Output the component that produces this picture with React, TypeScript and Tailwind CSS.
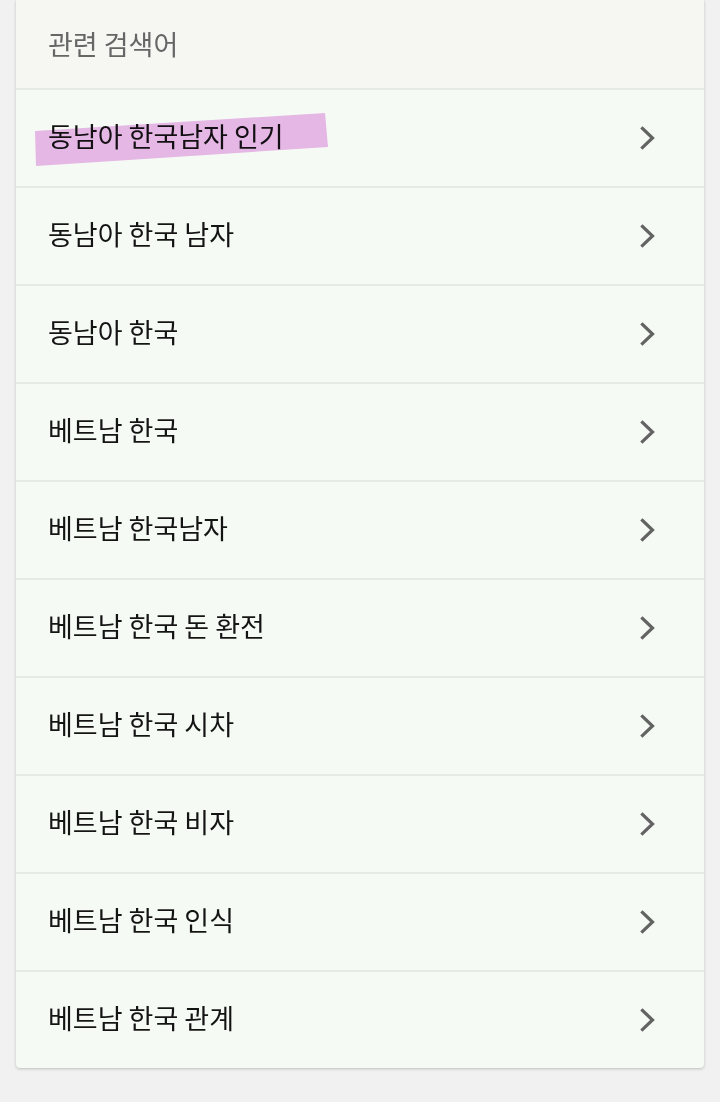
import * as React from 'react';

const items = [
  '동남아 한국남자 인기',
  '동남아 한국 남자',
  '동남아 한국',
  '베트남 한국',
  '베트남 한국남자',
  '베트남 한국 돈 환전',
  '베트남 한국 시차',
  '베트남 한국 비자',
  '베트남 한국 인식',
  '베트남 한국 관계',
];

const font = { fontFamily: '"Noto Sans CJK KR", "Noto Sans", sans-serif' };

function Chevron() {
  return (
    <svg width="16" height="24" viewBox="0 0 16 24" className="shrink-0">
      <path d="M2.5 2.5 L12.5 12 L2.5 21.5" fill="none" stroke="#636363" strokeWidth="3.2" strokeLinecap="square" />
    </svg>
  );
}

// highlighter stroke over the first row
function Highlight() {
  return (
    <svg className="pointer-events-none absolute left-0 top-0 mix-blend-multiply" width="340" height="98">
      <polygon points="19,41 309,23 312,57 20,76" fill="#eebbef" />
    </svg>
  );
}

export default function App() {
  return (
    <div className="min-h-[1102px] w-[720px] bg-[#f1f1f1] px-4 pb-9" style={font}>
      <div className="overflow-hidden rounded-b-[4px] bg-[#f5faf4] shadow-[0_1px_3px_rgba(0,0,0,0.22)]">
        <div className="flex h-[88px] items-center bg-[#f6f7f3] pl-8 text-[27px] text-[#666666]">
          관련 검색어
        </div>
        {items.map((item, i) => (
          <div
            key={item}
            className="relative flex h-[98px] items-center justify-between border-t-2 border-[#e6e9e4] pl-8 pr-[48px]"
          >
            <span className="-mt-1 text-[27px] text-[#141414]">{item}</span>
            <Chevron />
            {i === 0 && <Highlight />}
          </div>
        ))}
      </div>
    </div>
  );
}
